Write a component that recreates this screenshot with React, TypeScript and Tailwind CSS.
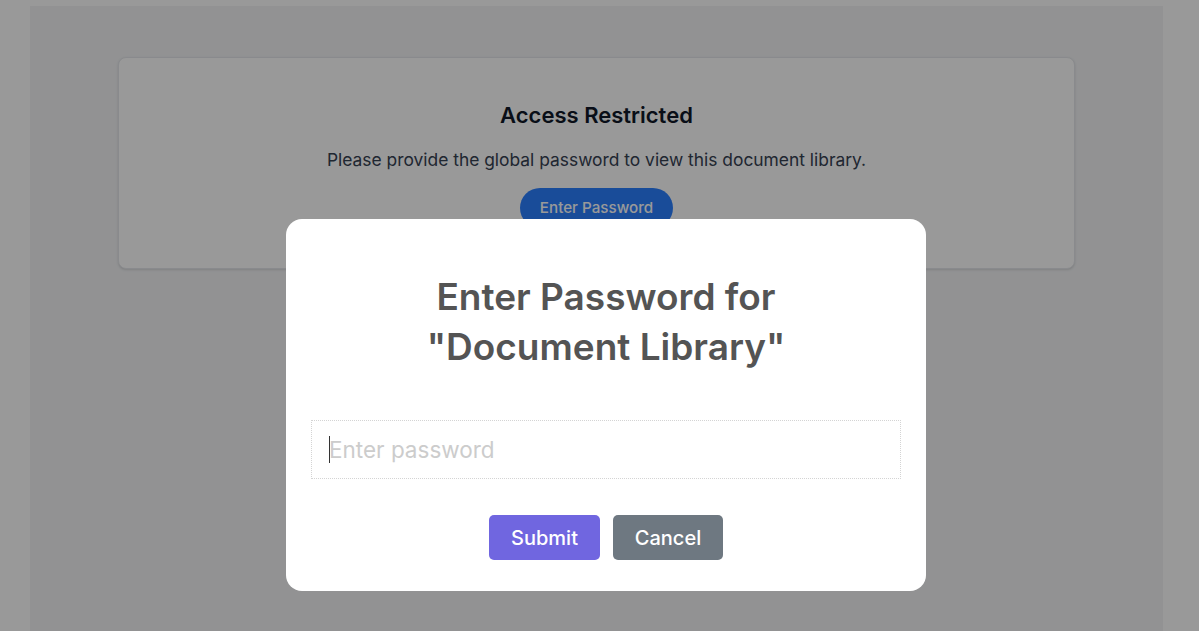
import { useState } from "react";

export default function App() {
    const [password, setPassword] = useState("");

    return (
        <div className="min-h-screen bg-white font-['Inter',sans-serif]">
            <div className="ml-[30px] mt-[6px] w-[1133px] h-[625px] bg-gray-100 pt-[51px]">
                <div className="mx-[88px] bg-white rounded-lg shadow-sm border border-gray-200 pt-[42px] pb-10 flex flex-col items-center text-center">
                    <h2 className="text-[22px] leading-[30px] font-semibold text-gray-900">Access Restricted</h2>
                    <p className="mt-[18px] text-[17.4px] leading-6 text-gray-700">
                        Please provide the global password to view this document library.
                    </p>
                    <button className="mt-4 h-10 px-5 rounded-full bg-blue-500 text-white text-[15.2px] font-medium">
                        Enter Password
                    </button>
                </div>
            </div>

            <div className="fixed inset-0 bg-black/40">
                <div className="absolute left-[286px] top-[219px] w-[640px] h-[372px] bg-white rounded-[16px] px-[25px] pt-[53px] flex flex-col items-center">
                    <h2 className="text-[37px] leading-[50px] font-semibold text-[#545454] text-center">
                        Enter Password for
                        <br />
                        "Document Library"
                    </h2>
                    <div className="relative w-full mt-[48px] border border-dotted border-[#d4d4d4]">
                        <input
                            type="password"
                            value={password}
                            onChange={(e) => setPassword(e.target.value)}
                            placeholder="Enter password"
                            className="block w-full h-[57px] pl-[17px] text-[22.5px] text-[#545454] placeholder:text-[#cccccc] outline-none bg-transparent"
                        />
                        {password === "" && (
                            <span className="absolute left-[17px] top-[15px] w-px h-[27px] bg-[#333]" />
                        )}
                    </div>
                    <div className="mt-[36px] flex gap-[13px]">
                        <button className="w-[111px] h-[45px] rounded-[5px] bg-[#7066e0] text-white text-[20px] font-medium">
                            Submit
                        </button>
                        <button className="w-[110px] h-[45px] rounded-[5px] bg-[#6e7881] text-white text-[20px] font-medium">
                            Cancel
                        </button>
                    </div>
                </div>
            </div>
        </div>
    );
}
